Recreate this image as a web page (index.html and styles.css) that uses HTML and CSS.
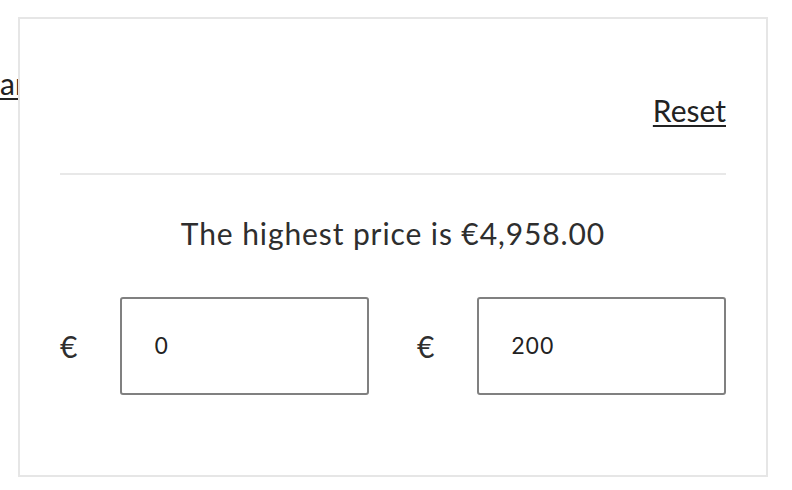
FILE: index.html
```html
<!DOCTYPE html>
<html lang="en">
<head>
<meta charset="utf-8">
<title>Price filter</title>
<link rel="stylesheet" href="styles.css">
</head>
<body>
<div class="page">
  <div class="behind"><a class="behind-link" href="#">ar</a></div>
  <div class="popover">
    <div class="popover-head"><a class="reset" href="#">Reset</a></div>
    <p class="note">The highest price is €4,958.00</p>
    <div class="range">
      <div class="field"><span class="cur">€</span><input class="price" type="text" value="0"></div>
      <div class="field"><span class="cur">€</span><input class="price" type="text" value="200"></div>
    </div>
  </div>
</div>
</body>
</html>
```

FILE: styles.css
```css
* { box-sizing: border-box; }
html, body { margin: 0; padding: 0; background: #fff; }
body {
  font-family: "Lato", "Noto Sans", sans-serif;
  color: #222;
  width: 792px;
  height: 490px;
  overflow: hidden;
}
.page { position: relative; width: 792px; height: 490px; }

.behind { padding-top: 65px; font-size: 30px; line-height: 36px; }
.behind-link { color: #222; text-decoration: underline; text-decoration-thickness: 2px; text-underline-offset: 3px; }

.popover {
  position: absolute;
  left: 18px;
  top: 17px;
  width: 750px;
  height: 460px;
  background: #fff;
  border: 2px solid #e6e6e6;
  padding: 0 40px;
}

.popover-head {
  display: flex;
  justify-content: flex-end;
  padding-top: 73px;
  padding-bottom: 45px;
  border-bottom: 2px solid #e8e8e8;
  font-size: 30px;
  line-height: 36px;
}
.reset {
  color: #222;
  text-decoration: underline;
  text-decoration-thickness: 2px;
  text-underline-offset: 3px;
}

.note {
  margin: 40px 0 0;
  text-align: center;
  font-size: 30px;
  line-height: 36px;
  letter-spacing: 0.9px;
  color: #2e2e2e;
}

.range {
  display: flex;
  justify-content: space-between;
  margin-top: 46px;
}
.field { display: flex; align-items: center; width: 309px; }
.cur { width: 60px; font-size: 30px; line-height: 36px; color: #2e2e2e; }
.price {
  width: 249px;
  height: 98px;
  border: 2px solid #808080;
  border-radius: 3px;
  padding: 0 0 0 32px;
  font-family: "Inter", sans-serif;
  font-size: 23px;
  color: #222;
  background: #fff;
  outline: none;
}
```
